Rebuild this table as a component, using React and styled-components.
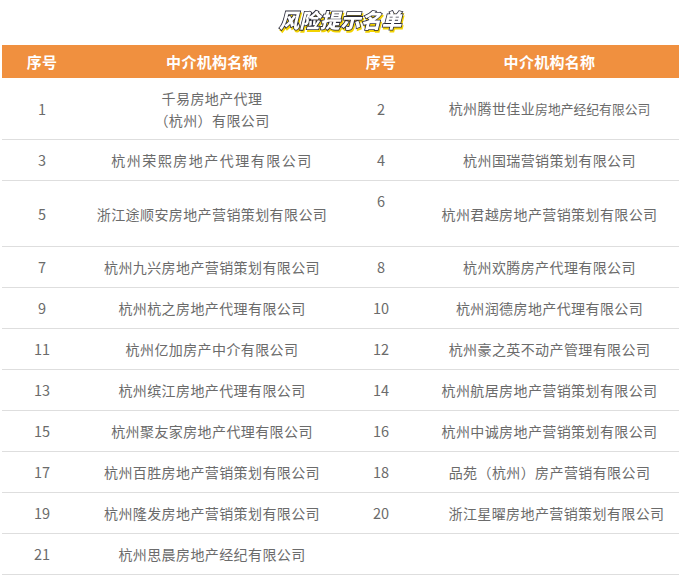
import React from "react";
import styled, { createGlobalStyle } from "styled-components";

const Global = createGlobalStyle`
  html, body { margin: 0; padding: 0; background: #fff; }
  body { font-family: "Noto Sans CJK SC", "Noto Sans", sans-serif; }
`;

const Page = styled.div`
  width: 687px;
  padding-left: 2px;
  box-sizing: border-box;
`;

const TitleBar = styled.div`
  height: 45px;
  display: flex;
  align-items: center;
  justify-content: center;
  width: 677px;
`;

const Title = styled.h1`
  margin: 0;
  font-size: 20px;
  font-weight: 900;
  font-style: italic;
  color: #fff;
  letter-spacing: 0.5px;
  -webkit-text-stroke: 1.6px #262636;
  paint-order: stroke fill;
  filter: drop-shadow(1.5px 2px 0 #f3d300);
  line-height: 1;
  transform: translateY(-3px);
`;

const Table = styled.div`
  width: 677px;
  display: flex;
  flex-direction: column;
`;

const cols = "80px 260px 78px 259px";

const HeadRow = styled.div`
  display: grid;
  grid-template-columns: ${cols};
  height: 33px;
  background: #f0903f;
`;

const HeadCell = styled.div`
  display: flex;
  align-items: center;
  justify-content: center;
  color: #fff;
  font-weight: 700;
  font-size: 15px;
  letter-spacing: 0.3px;
`;

const Row = styled.div`
  display: grid;
  grid-template-columns: ${cols};
  height: ${(p) => p.$h}px;
  box-sizing: border-box;
  border-bottom: 1px solid #dedede;
`;

const Cell = styled.div`
  display: flex;
  flex-direction: column;
  align-items: center;
  justify-content: ${(p) => (p.$top ? "flex-start" : "center")};
  padding-top: ${(p) => (p.$top ? "9px" : "0")};
  padding-left: ${(p) => p.$shift ?? 0}px;
  color: #6b6b6b;
  font-size: 14px;
  line-height: 22px;
  letter-spacing: ${(p) => p.$ls ?? 0.4}px;
  text-align: center;
  white-space: nowrap;
`;

const Num = styled(Cell)`
  font-size: 14.5px;
  letter-spacing: 0;
`;

const Small = styled.span`
  font-size: 12.8px;
  letter-spacing: 0;
`;

const rows = [
  { h: 62, a: "1", an: <><span>千易房地产代理</span><span>（杭州）有限公司</span></>, b: "2", bn: <span>杭州腾世佳业<Small>房地产经纪有限公司</Small></span> },
  { h: 41, a: "3", an: "杭州荣熙房地产代理有限公司", als: 1.5, b: "4", bn: "杭州国瑞营销策划有限公司" },
  { h: 66, a: "5", an: "浙江途顺安房地产营销策划有限公司", b: "6", btop: true, bn: "杭州君越房地产营销策划有限公司" },
  { h: 41, a: "7", an: "杭州九兴房地产营销策划有限公司", b: "8", bn: "杭州欢腾房产代理有限公司" },
  { h: 41, a: "9", an: "杭州杭之房地产代理有限公司", b: "10", bn: "杭州润德房地产代理有限公司" },
  { h: 41, a: "11", an: "杭州亿加房产中介有限公司", b: "12", bn: "杭州豪之英不动产管理有限公司" },
  { h: 41, a: "13", an: "杭州缤江房地产代理有限公司", b: "14", bn: "杭州航居房地产营销策划有限公司" },
  { h: 41, a: "15", an: "杭州聚友家房地产代理有限公司", b: "16", bn: "杭州中诚房地产营销策划有限公司" },
  { h: 41, a: "17", an: "杭州百胜房地产营销策划有限公司", b: "18", bn: "品苑（杭州）房产营销有限公司" },
  { h: 41, a: "19", an: "杭州隆发房地产营销策划有限公司", b: "20", bn: "浙江星曜房地产营销策划有限公司", bshift: 14 },
  { h: 41, a: "21", an: "杭州思晨房地产经纪有限公司", b: "", bn: "" },
];

export default function App() {
  return (
    <Page>
      <Global />
      <TitleBar>
        <Title>风险提示名单</Title>
      </TitleBar>
      <Table>
        <HeadRow>
          <HeadCell>序号</HeadCell>
          <HeadCell>中介机构名称</HeadCell>
          <HeadCell>序号</HeadCell>
          <HeadCell>中介机构名称</HeadCell>
        </HeadRow>
        {rows.map((r, i) => (
          <Row key={i} $h={r.h}>
            <Num>{r.a}</Num>
            <Cell $ls={r.als}>{r.an}</Cell>
            <Num $top={r.btop}>{r.b}</Num>
            <Cell $shift={r.bshift}>{r.bn}</Cell>
          </Row>
        ))}
      </Table>
    </Page>
  );
}
